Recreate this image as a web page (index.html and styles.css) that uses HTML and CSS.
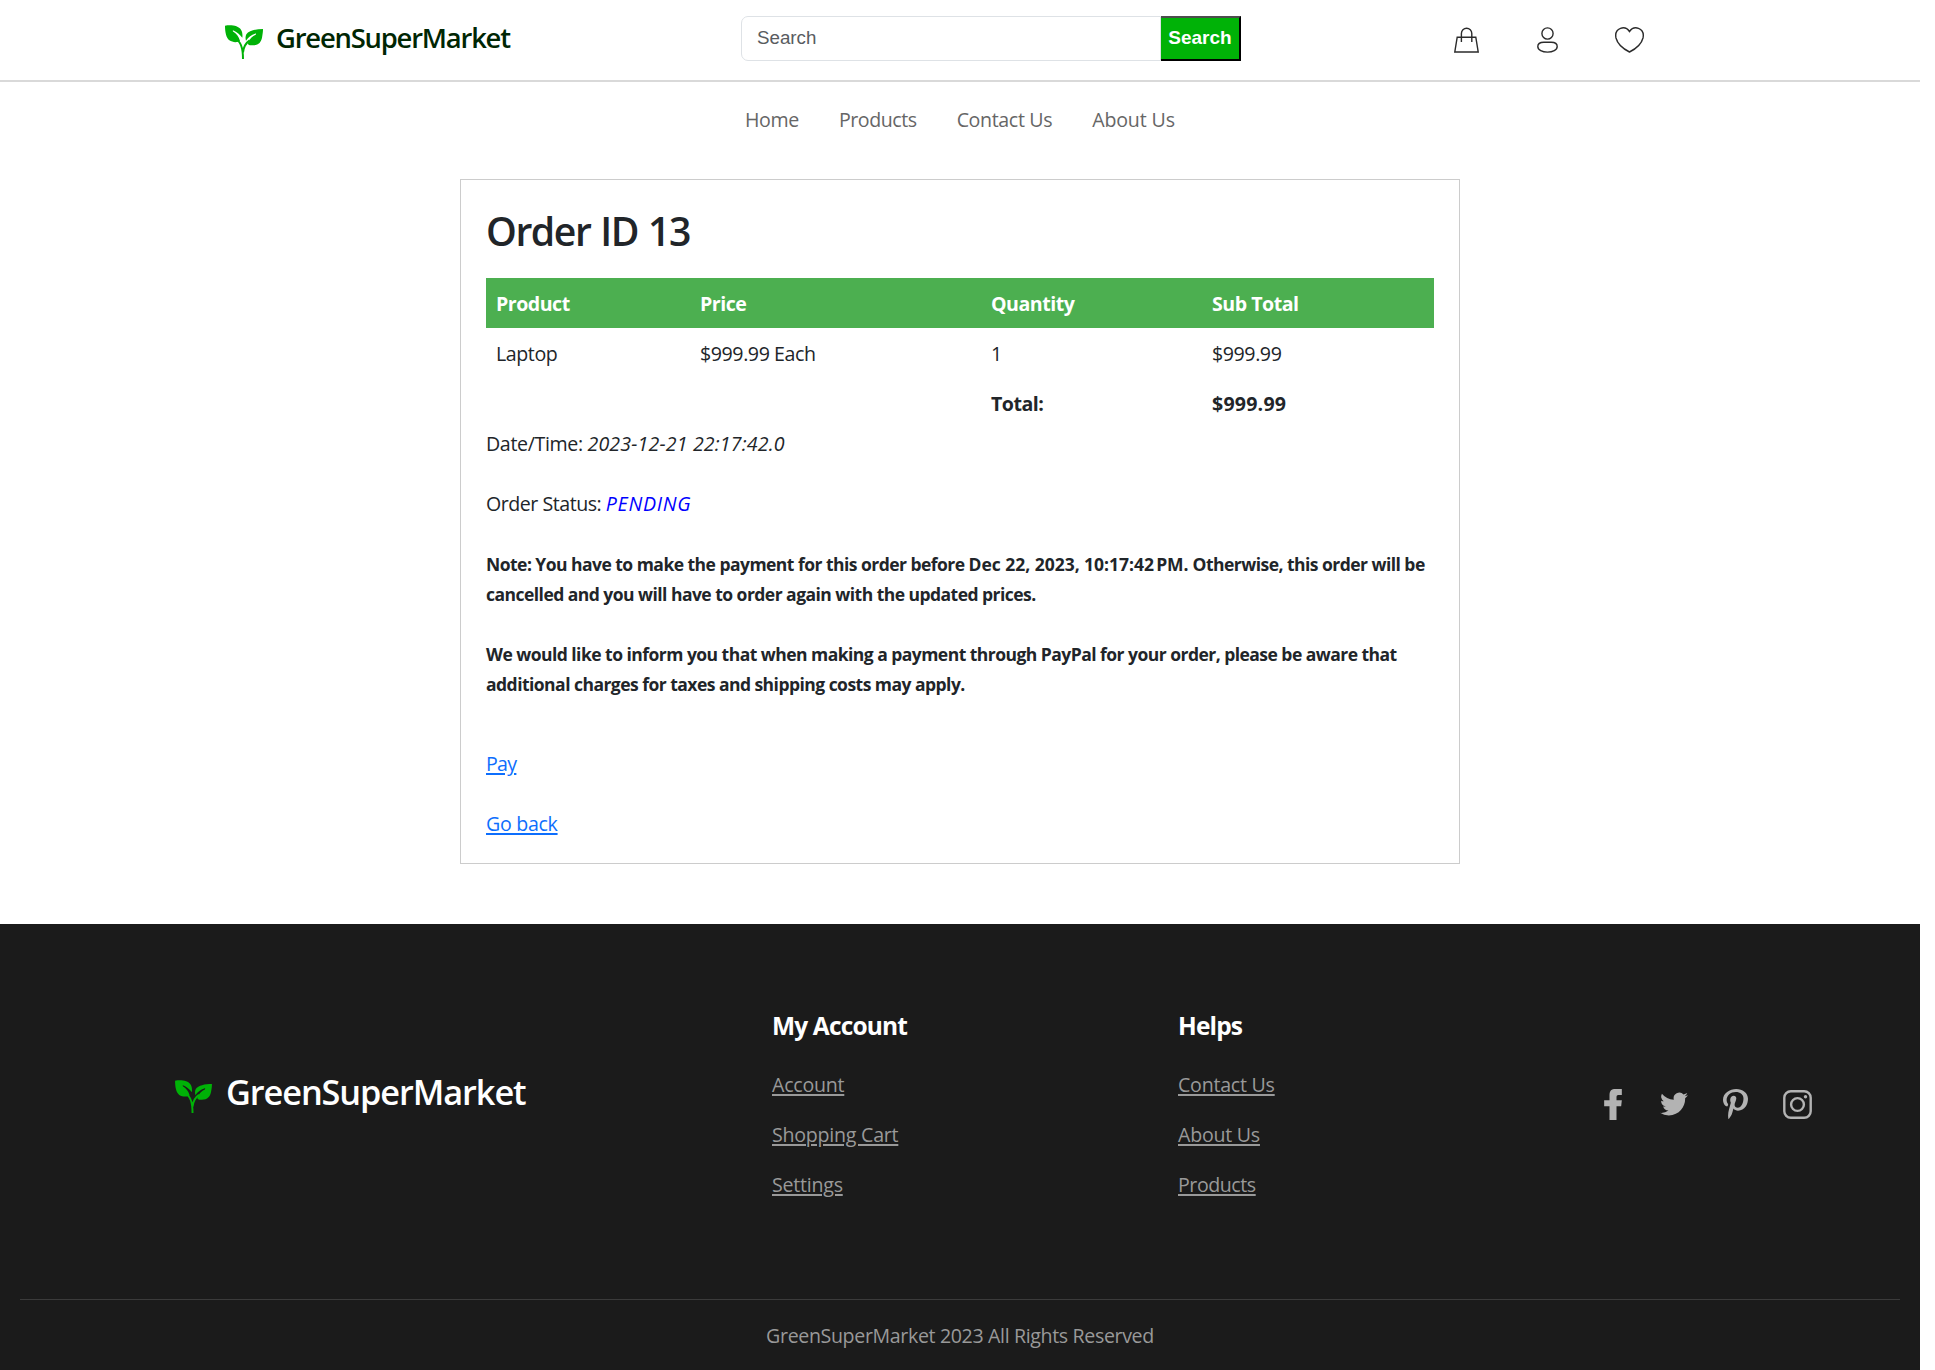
FILE: index.html
```html
<!DOCTYPE html>
<html lang="en">
<head>
<meta charset="utf-8">
<title>GreenSuperMarket - Order</title>
<link rel="stylesheet" href="styles.css">
</head>
<body>
<svg class="defs" width="0" height="0" aria-hidden="true">
  <symbol id="leaf" viewBox="0 0 114 102">
    <path fill="#00b207" d="M0 2C20-1 40 2 48 14c4 6 5 14 4 24C44 28 36 21 27 17c-4-1-5 1-2 3 9 6 16 13 20 27-6 6-22 6-32-1C3 38 0 20 0 2zM114 12C92 12 72 16 64 28c-3 6-3 13-1 19 7-11 17-18 27-21 3-1 4 1 2 3-10 4-16 11-22 22-3 7 0 10 10 10 20 1 28-9 31-23 2-10 3-18 3-26z"/>
    <path fill="none" stroke="#00b207" stroke-width="6" d="M32 43c16 6 22 26 22 59M54 82c2-18 8-28 20-36"/>
  </symbol>
</svg>
<div class="page">
  <header class="topbar">
    <a class="brand"><svg class="brand-leaf"><use href="#leaf"/></svg><span class="brand-name">GreenSuperMarket</span></a>
    <form class="search">
      <input class="search-input" type="text" placeholder="Search">
      <button class="search-button" type="button">Search</button>
    </form>
    <div class="actions">
      <svg class="icon-bag" viewBox="0 0 25 26"><path d="M3.2 10.2h18.600l2.400 14.800H.8zM7.400 15V6.500a5.200 5.200 0 0 1 10.400 0V15"/></svg>
      <svg class="icon-user" viewBox="0 0 21 26"><circle cx="10.500" cy="6.500" r="5.600"/><path d="M.8 19.500c0-3.500 3-4.200 6-4.200h7.400c3 0 6 .7 6 4.200 0 3.600-4.500 5.600-9.700 5.600S.8 23.100.8 19.500z"/></svg>
      <svg class="icon-heart" viewBox="0 0 29 26"><path d="M14.500 4.500C12 .8 8.500.3 5.500 1.300 1.500 2.800.2 7 1 11c1.500 6 7.500 11 13.500 14C20.500 22 26.500 17 28 11c.8-4-.5-8.200-4.500-9.700-3-1-6.500-.5-9 3.200z"/></svg>
    </div>
  </header>
  <nav class="menu">
    <a class="menu-home">Home</a><a class="menu-products">Products</a><a class="menu-contact">Contact Us</a><a class="menu-about">About Us</a>
  </nav>
  <main class="order">
    <h1 class="order-title">Order ID 13</h1>
    <table class="items">
      <thead><tr><th class="col-product">Product</th><th class="col-price">Price</th><th class="col-quantity">Quantity</th><th class="col-total">Sub Total</th></tr></thead>
      <tbody>
        <tr><td>Laptop</td><td>$999.99 Each</td><td>1</td><td>$999.99</td></tr>
        <tr class="total"><td></td><td></td><td>Total:</td><td class="total-sum">$999.99</td></tr>
      </tbody>
    </table>
    <p class="line">Date/Time: <i class="date">2023-12-21 22:17:42.0</i></p>
    <p class="line status">Order Status: <i class="pending">PENDING</i></p>
    <p class="note">Note: You have to make the payment for this order before <span class="deadline">Dec 22, 2023, 10:17:42&#8239;PM.</span> Otherwise, this order will be<br>cancelled and you will have to order again with the updated prices.</p>
    <p class="note">We would like to inform you that when making a payment through PayPal for your order, please be aware that<br>additional charges for taxes and shipping costs may apply.</p>
    <p class="link-row pay"><a>Pay</a></p>
    <p class="link-row"><a>Go back</a></p>
  </main>
  <footer class="footer">
    <div class="footer-main">
      <a class="footer-brand"><svg class="footer-leaf"><use href="#leaf"/></svg><span class="footer-name">GreenSuperMarket</span></a>
      <section class="links">
        <h2>My Account</h2>
        <a>Account</a><a>Shopping Cart</a><a>Settings</a>
      </section>
      <section class="links">
        <h2>Helps</h2>
        <a>Contact Us</a><a>About Us</a><a class="tight">Products</a>
      </section>
      <div class="social">
        <svg class="facebook" viewBox="0 0 53 93"><path d="M16 93V52H0V34h16V18C16 5 22 0 34 0h19v18H42q-5 0-5 5v11h16l-2 18H37v41z"/></svg>
        <svg class="twitter" viewBox="0 2 16 13"><path d="M5.026 15c6.038 0 9.341-5.003 9.341-9.334 0-.14 0-.282-.006-.422A6.685 6.685 0 0 0 16 3.542a6.658 6.658 0 0 1-1.889.518 3.301 3.301 0 0 0 1.447-1.817 6.533 6.533 0 0 1-2.087.793A3.286 3.286 0 0 0 7.875 6.030a9.325 9.325 0 0 1-6.767-3.429 3.289 3.289 0 0 0 1.018 4.382A3.323 3.323 0 0 1 .64 6.575v.045a3.288 3.288 0 0 0 2.632 3.218 3.203 3.203 0 0 1-.865.115 3.230 3.230 0 0 1-.614-.057 3.283 3.283 0 0 0 3.067 2.277A6.588 6.588 0 0 1 .78 13.580a6.320 6.320 0 0 1-.78-.045A9.344 9.344 0 0 0 5.026 15z"/></svg>
        <svg class="pinterest" viewBox="0 6.500 384 499" preserveAspectRatio="none"><path d="M204 6.500C101.400 6.500 0 74.900 0 185.600 0 256 39.600 296 63.600 296c9.900 0 15.600-27.600 15.600-35.400 0-9.300-23.700-29.100-23.700-67.800 0-80.400 61.200-137.400 140.400-137.400 68.100 0 118.500 38.700 118.500 109.800 0 53.100-21.300 152.700-90.300 152.700-24.900 0-46.200-18-46.200-43.800 0-37.800 26.400-74.400 26.400-113.400 0-66.200-93.900-54.200-93.900 25.800 0 16.800 2.100 35.400 9.600 50.700-13.800 59.400-42 147.900-42 209.100 0 18.900 2.700 37.500 4.500 56.400 3.400 3.800 1.700 3.400 6.900 1.500 50.400-69 48.600-82.500 71.400-172.800 12.300 23.400 44.100 36 69.300 36 106.200 0 153.900-103.500 153.900-196.800C384 71.300 298.200 6.500 204 6.500z"/></svg>
        <svg class="instagram" viewBox="0 0 29 29"><rect x="1.300" y="1.300" width="26.400" height="26.400" rx="6.500"/><circle cx="14.500" cy="14.500" r="6.400"/><circle class="dot" cx="22.500" cy="6.700" r="1.700"/></svg>
      </div>
    </div>
    <div class="copyright">GreenSuperMarket 2023 All Rights Reserved</div>
  </footer>
</div>
</body>
</html>
```
FILE: styles.css
```css
* { box-sizing: border-box; }
html { overflow: hidden; }
body {
  margin: 0;
  background: #fff;
  color: #212529;
  font: 19.6px/30px "Open Sans", "Noto Sans", sans-serif;
  letter-spacing: -0.36px;
}
h1, h2, p { margin: 0; }
.defs { position: absolute; }
.page {
  display: flex;
  flex-direction: column;
  width: 1920px;
  height: 1370px;
}

.topbar {
  display: grid;
  grid-template-columns: 516px 501px 1fr;
  height: 82px;
  padding-left: 225px;
  border-bottom: 2px solid #d9d9d9;
}
.brand { display: flex; gap: 13px; }
.brand-leaf { width: 38px; height: 34px; margin-top: 25px; }
.brand-name {
  margin-top: 17px;
  color: #002603;
  font-size: 27.4px;
  font-weight: 600;
  line-height: 42px;
  letter-spacing: -1.2px;
}
.search { display: flex; height: 45px; margin-top: 16px; }
.search-input {
  width: 420px;
  padding: 0 15px 2px;
  border: 1px solid #dee2e6;
  border-radius: 7px 0 0 7px;
  font: 18.75px "Liberation Sans", Arial, sans-serif;
}
.search-input::placeholder { color: #595c5f; }
.search-button {
  width: 80px;
  padding: 0 0 2px;
  border: solid #000;
  border-width: 2px 2px 2px 0;
  border-top-color: #4d4d4d;
  background: #00b207;
  color: #fff;
  font: bold 19px "Liberation Sans", Arial, sans-serif;
}
.actions {
  display: flex;
  gap: 58px;
  padding: 27px 0 0 212px;
}
.actions svg { height: 26px; fill: none; stroke: #2b2b2b; stroke-width: 1.4; }
.icon-bag { width: 25px; }
.icon-user { width: 21px; }
.icon-heart { width: 29px; margin-left: -1px; }

.menu {
  display: flex;
  gap: 40px;
  padding: 23px 0 0 745px;
  color: #666;
}
.menu-products { letter-spacing: -0.45px; }
.menu-contact { letter-spacing: -0.36px; }
.menu-about { letter-spacing: -0.15px; }

.order {
  width: 1000px;
  height: 685px;
  margin: 44px 0 0 460px;
  padding: 25px;
  border: 1px solid #ccc;
}
.order-title {
  padding-top: 2px;
  height: 73px;
  font-size: 39.2px;
  font-weight: 600;
  line-height: 48px;
  letter-spacing: -1.45px;
  word-spacing: 1.2px;
}
.items { width: 948px; border-collapse: collapse; table-layout: fixed; }
.items th, .items td { height: 50px; padding: 11px 10px 9px; text-align: left; }
.items td { letter-spacing: -0.42px; }
.items th { background: #4caf50; color: #fff; letter-spacing: -0.5px; }
.items .total td { font-weight: 700; letter-spacing: -0.5px; }
.items .total .total-sum { letter-spacing: 0.2px; }
.col-product { width: 204px; }
.col-price { width: 291px; }
.col-quantity { width: 221px; }
.line { padding-top: 1px; height: 30px; }
.date { letter-spacing: 0.16px; }
.status { margin-top: 30px; letter-spacing: -0.48px; }
.pending { color: #00f; letter-spacing: 0.7px; }
.note {
  height: 60px;
  margin-top: 30px;
  padding-top: 1px;
  font-size: 17.5px;
  font-weight: 700;
  letter-spacing: -0.53px;
  white-space: nowrap;
}
.deadline { letter-spacing: -0.03px; }
.link-row { height: 30px; margin-top: 30px; padding-top: 1px; letter-spacing: -0.3px; }
.link-row.pay { margin-top: 50px; letter-spacing: -0.7px; }
.link-row a {
  color: #0d6efd;
  text-decoration: underline 2px;
  text-underline-offset: 2px;
}

.footer {
  flex: 1;
  margin-top: 60px;
  padding: 0 20px;
  background: #1b1b1b;
  color: #999;
}
.footer-main {
  display: grid;
  grid-template-columns: 597px 406px 425px 1fr;
  height: 376px;
  padding-left: 155px;
  border-bottom: 1px solid #3b3b3b;
}
.footer-brand { display: flex; gap: 14px; padding-top: 156px; }
.footer-leaf { width: 37px; height: 33px; }
.footer-name {
  margin-top: -13px;
  color: #fff;
  font-size: 34.3px;
  font-weight: 600;
  line-height: 50px;
  letter-spacing: -1.08px;
}
.links {
  display: flex;
  flex-direction: column;
  align-items: flex-start;
  gap: 20px;
  padding-top: 87px;
}
.links h2 {
  margin-bottom: 9px;
  height: 30px;
  color: #fff;
  font-size: 24.5px;
  font-weight: 700;
  line-height: 30px;
  letter-spacing: -0.85px;
}
.links a {
  height: 30px;
  text-decoration: underline 2px;
  text-underline-offset: 2px;
  letter-spacing: -0.24px;
}
.links .tight { letter-spacing: -0.45px; }
.social { display: flex; padding: 165px 0 0 1px; }
.social svg { fill: #b3b3b3; }
.facebook { width: 18px; height: 31px; }
.twitter { width: 28px; height: 24px; margin: 3px 0 0 38px; }
.pinterest { width: 25px; height: 30px; margin-left: 35px; }
.instagram { width: 29px; height: 29px; margin: 1px 0 0 35px; }
.social .instagram { fill: none; stroke: #b3b3b3; stroke-width: 2.4; }
.instagram .dot { fill: #b3b3b3; stroke: none; }
.copyright {
  padding-top: 21px;
  text-align: center;
  letter-spacing: -0.36px;
}
```
